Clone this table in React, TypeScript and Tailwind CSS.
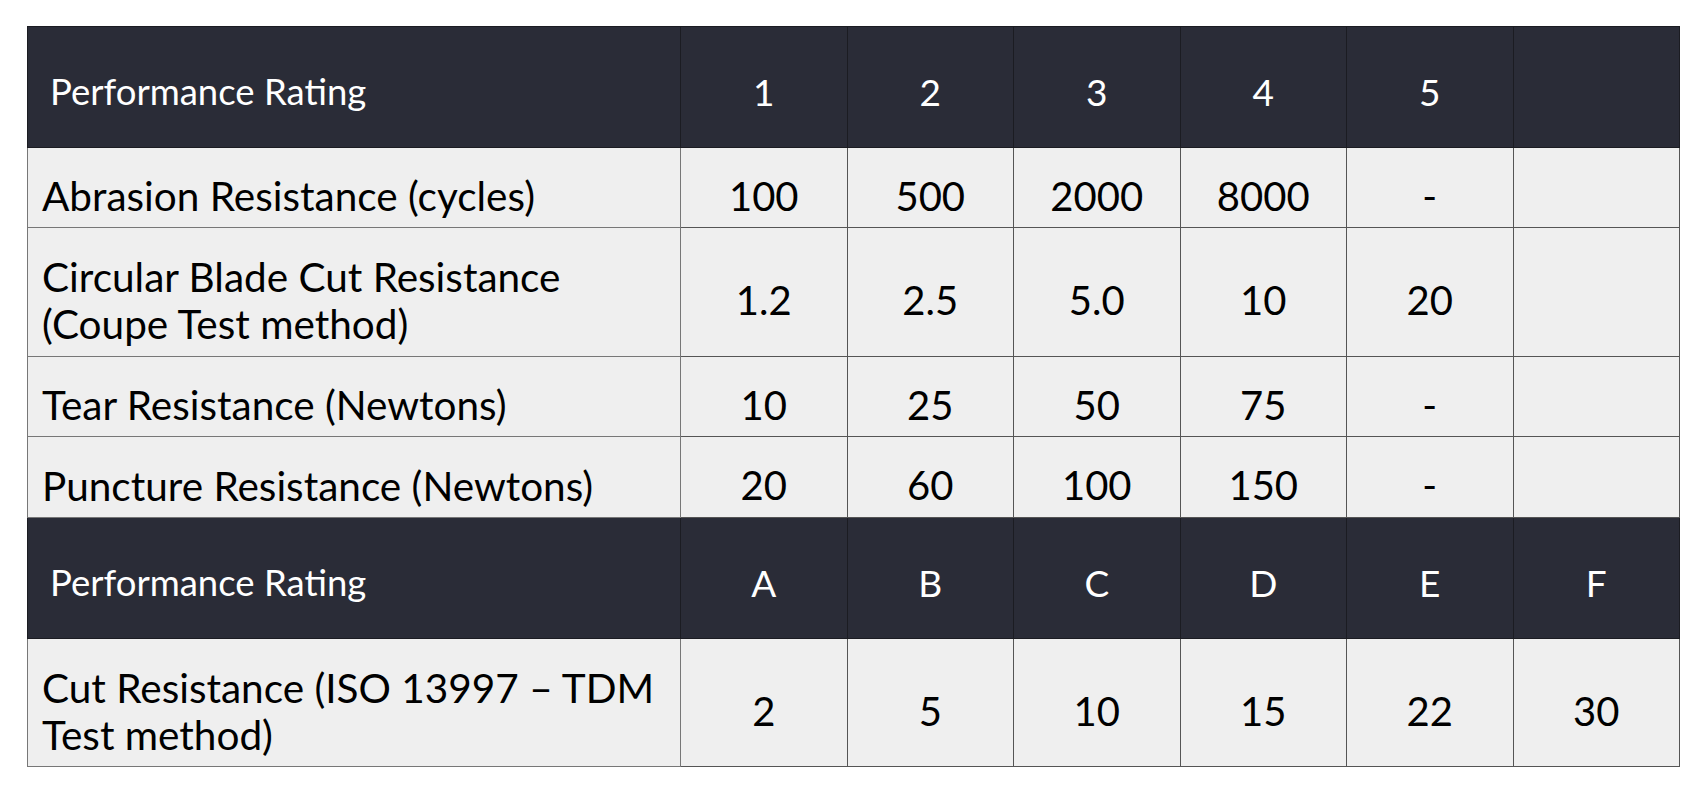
const topRows = [
  { label: "Abrasion Resistance (cycles)", values: ["100", "500", "2000", "8000", "-", ""], h: "h-[80px]" },
  { label: "Circular Blade Cut Resistance (Coupe Test method)", values: ["1.2", "2.5", "5.0", "10", "20", ""], h: "h-[129px]" },
  { label: "Tear Resistance (Newtons)", values: ["10", "25", "50", "75", "-", ""], h: "h-[80px]" },
  { label: "Puncture Resistance (Newtons)", values: ["20", "60", "100", "150", "-", ""], h: "h-[81px]" },
];

function HeaderRow({ cells }: { cells: string[] }) {
  return (
    <tr className="h-[121px] bg-[#2a2c37] text-white">
      <th className="border border-[#1b1c22] pl-[22px] pt-[9px] text-left align-middle text-[36.5px] font-normal">
        Performance Rating
      </th>
      {cells.map((c, i) => (
        <th key={i} className="border border-[#1b1c22] pt-[9px] text-center align-middle text-[37px] font-normal">
          {c}
        </th>
      ))}
    </tr>
  );
}

function BodyRow({ label, values, h }: { label: string; values: string[]; h: string }) {
  return (
    <tr className={`${h} bg-[#efefef] text-black`}>
      <td className="border border-[#777] pl-[14px] pr-[6px] pt-[16px] align-middle text-[40.5px] leading-[47px]">
        {label}
      </td>
      {values.map((v, i) => (
        <td key={i} className="border border-[#555] pt-[16px] text-center align-middle text-[40px]">
          {v}
        </td>
      ))}
    </tr>
  );
}

export default function App() {
  return (
    <div className="min-h-screen bg-white pl-[27px] pt-[26px] font-['Lato',sans-serif]">
      <table className="w-[1653px] table-fixed border-collapse">
        <colgroup>
          <col className="w-[653px]" />
          <col />
          <col />
          <col />
          <col />
          <col />
          <col />
        </colgroup>
        <tbody>
          <HeaderRow cells={["1", "2", "3", "4", "5", ""]} />
          {topRows.map((r) => (
            <BodyRow key={r.label} label={r.label} values={r.values} h={r.h} />
          ))}
          <HeaderRow cells={["A", "B", "C", "D", "E", "F"]} />
          <BodyRow
            label="Cut Resistance (ISO 13997 – TDM Test method)"
            values={["2", "5", "10", "15", "22", "30"]}
            h="h-[128px]"
          />
        </tbody>
      </table>
    </div>
  );
}
